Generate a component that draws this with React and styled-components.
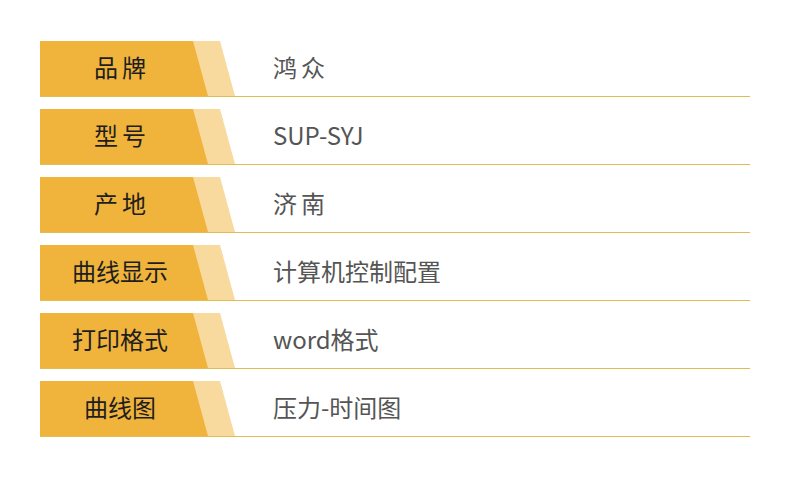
import React from 'react';
import styled, { createGlobalStyle } from 'styled-components';

const GlobalStyle = createGlobalStyle`
    body {
        margin: 0;
        background: #fff;
        font-family: "Noto Sans CJK SC", "Noto Sans", sans-serif;
    }
`;

const Table = styled.section`
    width: 710px;
    padding: 41px 40px;
    display: flex;
    flex-direction: column;
    gap: 12px;
`;

const Row = styled.div`
    display: flex;
    align-items: center;
    height: 55px;
    border-bottom: 1px solid #e3bb55;
`;

const Tag = styled.div`
    flex: 0 0 195px;
    height: 100%;
    background: #f9da9e;
    clip-path: polygon(0 0, 180px 0, 195px 100%, 0 100%);
`;

const TagFront = styled.div`
    height: 100%;
    width: 168px;
    background: #f0b33c;
    clip-path: polygon(0 0, 153px 0, 168px 100%, 0 100%);
    display: flex;
    align-items: center;
    justify-content: center;
    padding: 0 ${(p) => (p.$spaced ? '4px' : '8px')} 4px 0;
    box-sizing: border-box;
    font-size: 24px;
    line-height: 1;
    color: #1e1e1e;
    letter-spacing: ${(p) => (p.$spaced ? '4px' : '0')};
`;

const Value = styled.div`
    padding: 0 0 4px 38px;
    font-size: 24px;
    line-height: 1;
    color: #555;
    letter-spacing: ${(p) => (p.$spaced ? '4px' : '0')};
`;

const rows = [
    { label: '品牌', value: '鸿众', spaced: true },
    { label: '型号', value: 'SUP-SYJ', spaced: true, valueFlat: true },
    { label: '产地', value: '济南', spaced: true },
    { label: '曲线显示', value: '计算机控制配置' },
    { label: '打印格式', value: 'word格式' },
    { label: '曲线图', value: '压力-时间图' },
];

export default function App() {
    return (
        <>
            <GlobalStyle />
            <Table>
                {rows.map((r) => (
                    <Row key={r.label}>
                        <Tag>
                            <TagFront $spaced={r.spaced}>{r.label}</TagFront>
                        </Tag>
                        <Value $spaced={r.spaced && !r.valueFlat}>{r.value}</Value>
                    </Row>
                ))}
            </Table>
        </>
    );
}
